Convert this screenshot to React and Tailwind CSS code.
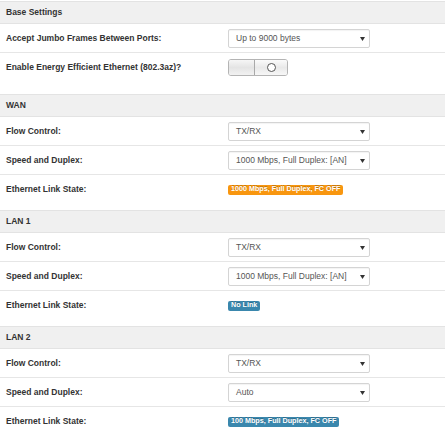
const SECTIONS = [
  {
    title: 'WAN',
    flow: 'TX/RX',
    speed: '1000 Mbps, Full Duplex: [AN]',
    link: { text: '1000 Mbps, Full Duplex, FC OFF', tone: 'warning' },
  },
  {
    title: 'LAN 1',
    flow: 'TX/RX',
    speed: '1000 Mbps, Full Duplex: [AN]',
    link: { text: 'No Link', tone: 'info' },
  },
  {
    title: 'LAN 2',
    flow: 'TX/RX',
    speed: 'Auto',
    link: { text: '100 Mbps, Full Duplex, FC OFF', tone: 'info' },
  },
];

const BADGE = {
  warning: 'bg-[#f8960f]',
  info: 'bg-[#3a87ad]',
};

function Header({ children }) {
  return (
    <div className="h-[23px] flex items-center pl-[6px] bg-[#f0f0f0] border-t border-b border-[#e3e3e3] text-[8.5px] font-bold text-[#333]">
      {children}
    </div>
  );
}

function Select({ value }) {
  return (
    <div className="w-[142px] h-[19px] flex items-center justify-between pl-[7px] pr-[4px] bg-white border border-[#d4d4d4] rounded-[2px] shadow-[inset_0_1px_1px_rgba(0,0,0,0.05)] text-[8.5px] text-[#555]">
      <span>{value}</span>
      <svg width="5" height="4" viewBox="0 0 5 4">
        <path d="M0 0h5L2.5 4z" fill="#333" />
      </svg>
    </div>
  );
}

function Row({ label, children, tall = false, last = false }) {
  return (
    <div
      className={`flex items-start pt-[5px] pl-[6px] ${tall ? 'h-[35px]' : 'h-[29px]'} ${last ? '' : 'border-b border-[#e6e6e6]'}`}
    >
      <div className="w-[222px] h-[19px] flex items-center text-[8.5px] font-bold text-[#333]">{label}</div>
      <div className="h-[19px] flex items-center">{children}</div>
    </div>
  );
}

function Badge({ text, tone }) {
  return (
    <span
      className={`${BADGE[tone]} rounded-[2px] px-[3px] h-[10px] flex items-center text-[7.2px] font-bold text-white [text-shadow:0_-1px_0_rgba(0,0,0,0.25)]`}
    >
      {text}
    </span>
  );
}

function Toggle() {
  return (
    <div className="w-[60px] h-[17px] flex rounded-[3px] border border-[#b4b4b4] overflow-hidden">
      <div className="w-[26px] border-r border-[#a9a9a9] bg-gradient-to-b from-[#f6f6f6] via-[#e4e4e4] to-[#f2f2f2]" />
      <div className="flex-1 flex items-center justify-center bg-gradient-to-b from-[#fbfbfb] via-[#e9e9e9] to-[#f7f7f7]">
        <span className="w-[9px] h-[9px] rounded-full border border-[#555] bg-white" />
      </div>
    </div>
  );
}

export default function App() {
  return (
    <div className="w-[445px] pt-px bg-white" style={{ fontFamily: '"Liberation Sans", Arial, sans-serif' }}>
      <Header>Base Settings</Header>
      <Row label="Accept Jumbo Frames Between Ports:">
        <Select value="Up to 9000 bytes" />
      </Row>
      <div className="h-[41px] flex items-start pt-[6px] pl-[6px]">
        <div className="w-[222px] h-[17px] flex items-center text-[8.5px] font-bold text-[#333]">
          Enable Energy Efficient Ethernet (802.3az)?
        </div>
        <Toggle />
      </div>

      {SECTIONS.map((s) => (
        <div key={s.title}>
          <Header>{s.title}</Header>
          <Row label="Flow Control:">
            <Select value={s.flow} />
          </Row>
          <Row label="Speed and Duplex:">
            <Select value={s.speed} />
          </Row>
          <Row label="Ethernet Link State:" tall last>
            <Badge text={s.link.text} tone={s.link.tone} />
          </Row>
        </div>
      ))}
    </div>
  );
}
